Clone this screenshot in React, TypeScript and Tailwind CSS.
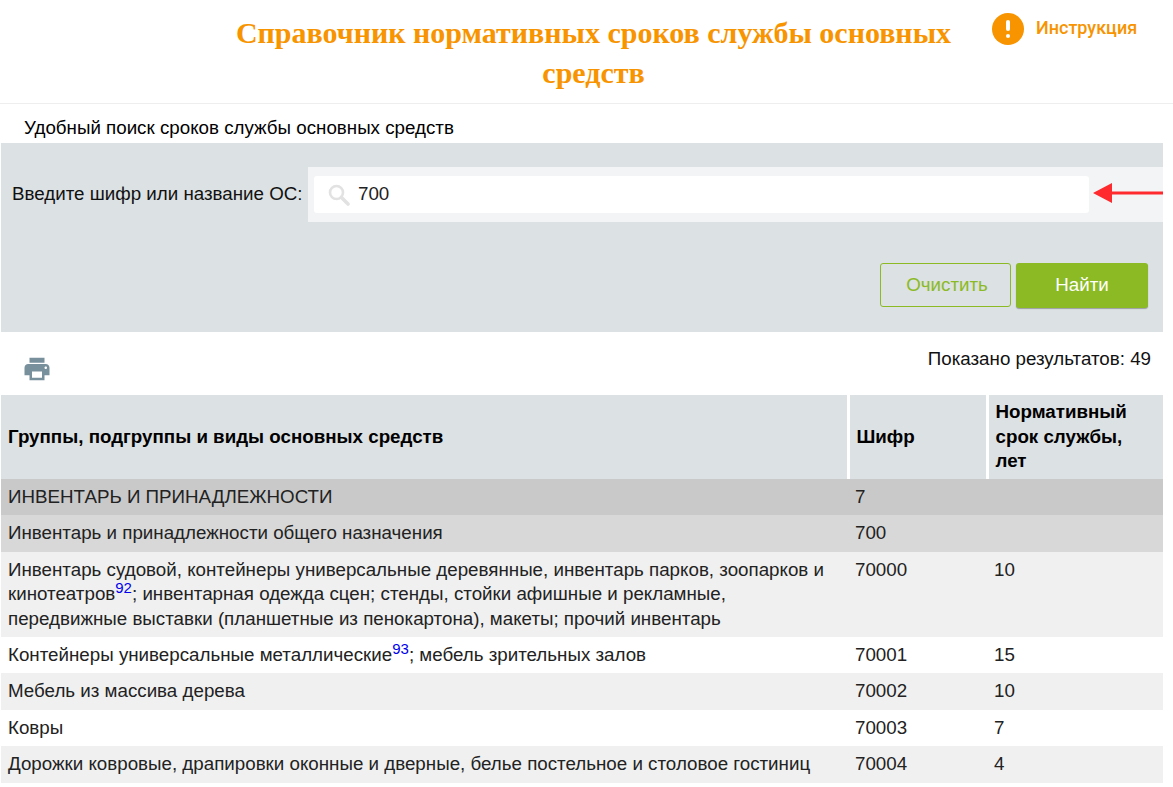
const rows = [
  { name: "ИНВЕНТАРЬ И ПРИНАДЛЕЖНОСТИ", code: "7", years: "", bg: "bg-[#c9c9c9]" },
  { name: "Инвентарь и принадлежности общего назначения", code: "700", years: "", bg: "bg-[#d8d8d8]" },
  {
    name: (
      <>
        Инвентарь судовой, контейнеры универсальные деревянные, инвентарь парков, зоопарков и кинотеатров
        <Note n="92" />; инвентарная одежда сцен; стенды, стойки афишные и рекламные, передвижные выставки (планшетные из пенокартона), макеты; прочий инвентарь
      </>
    ),
    code: "70000",
    years: "10",
    bg: "bg-[#f0f0f0]",
  },
  {
    name: (
      <>
        Контейнеры универсальные металлические
        <Note n="93" />; мебель зрительных залов
      </>
    ),
    code: "70001",
    years: "15",
    bg: "bg-white",
  },
  { name: "Мебель из массива дерева", code: "70002", years: "10", bg: "bg-[#f0f0f0]" },
  { name: "Ковры", code: "70003", years: "7", bg: "bg-white" },
  {
    name: "Дорожки ковровые, драпировки оконные и дверные, белье постельное и столовое гостиниц",
    code: "70004",
    years: "4",
    bg: "bg-[#f0f0f0]",
  },
];

function Note({ n }: { n: string }) {
  return <sup className="text-[15px] leading-none text-[#0000ee]">{n}</sup>;
}

export default function App() {
  return (
    <div className="h-[787px] w-[1173px] overflow-hidden bg-white font-['Liberation_Sans',Arial,sans-serif] text-[18.76px] text-[#222]">
      <header className="flex h-[104px] border-b border-[#eeeeee]">
        <h1 className="ml-[222px] w-[743px] pt-[13px] text-center font-['Liberation_Serif',serif] text-[30px] leading-[40px] font-bold text-[#f79400]">
          Справочник нормативных сроков службы основных средств
        </h1>
        <div className="mt-[13px] ml-[27px] flex h-[32px] items-center gap-[12px]">
          <span className="flex h-[32px] w-[32px] flex-col items-center justify-center gap-[3px] rounded-full bg-[#f79400]">
            <span className="h-[11px] w-[4px] rounded-[2px] bg-white" />
            <span className="h-[4px] w-[4px] rounded-full bg-white" />
          </span>
          <span className="mb-[3px] font-['Roboto',sans-serif] text-[18px] font-medium text-[#f79400]">Инструкция</span>
        </div>
      </header>

      <p className="flex h-[39px] items-center pt-[9px] pl-[24px] text-black">Удобный поиск сроков службы основных средств</p>

      <section className="ml-[1px] h-[189px] w-[1162px] bg-[#dce1e3]">
        <div className="flex pt-[24px]">
          <label className="w-[307px] pt-[13px] pl-[11px] text-[#111]">Введите шифр или название ОС:</label>
          <div className="relative flex h-[55px] w-[855px] items-center bg-[#f2f4f6] pl-[6px]">
            <div className="flex h-[37px] w-[775px] items-center gap-[8px] rounded-[3px] bg-white pl-[14px]">
              <svg width="22" height="22" viewBox="0 0 22 22" fill="none" stroke="#e2e2e2">
                <circle cx="8.5" cy="8.5" r="6.5" strokeWidth="2.6" />
                <path d="M13.5 13.5 L20 20" strokeWidth="3.6" strokeLinecap="round" />
              </svg>
              <span className="text-[#222]">700</span>
            </div>
            <svg className="absolute top-[15px] left-[784px]" width="71" height="22" viewBox="0 0 71 22">
              <path d="M1 11 L20 1 V9.5 H71 V12.5 H20 V21 Z" fill="#fe2a2e" />
            </svg>
          </div>
        </div>
        <div className="mt-[41px] flex justify-end gap-[5px] pr-[15px]">
          <button className="h-[44px] w-[131px] rounded-[3px] border border-[#8bba25] pl-[3px] text-[#8bba25]">Очистить</button>
          <button className="h-[45px] w-[132px] rounded-[3px] bg-[#8bba25] font-medium text-white shadow-[0_1px_1px_rgba(0,0,0,0.3)]">
            Найти
          </button>
        </div>
      </section>

      <div className="flex h-[63px] items-start justify-between pr-[22px] pl-[22px]">
        <svg className="mt-[22px]" width="30" height="30" viewBox="0 0 24 24" fill="#78909c">
          <path d="M19 8H5c-1.66 0-3 1.34-3 3v6h4v4h12v-4h4v-6c0-1.66-1.34-3-3-3zm-3 11H8v-5h8v5zm3-7c-.55 0-1-.45-1-1s.45-1 1-1 1 .45 1 1-.45 1-1 1zm-1-9H6v4h12V3z" />
        </svg>
        <span className="pt-[13px] text-[#111]">Показано результатов: 49</span>
      </div>

      <table className="ml-[1px] w-[1162px] table-fixed border-collapse leading-[24.4px]">
        <colgroup>
          <col className="w-[847px]" />
          <col className="w-[139px]" />
          <col />
        </colgroup>
        <thead>
          <tr className="h-[84px] bg-[#dce1e3] text-left font-bold text-black">
            <th className="border-r-[3px] border-white px-[7px]">Группы, подгруппы и виды основных средств</th>
            <th className="border-r-[3px] border-white px-[7px]">Шифр</th>
            <th className="px-[7px]">Нормативный срок службы, лет</th>
          </tr>
        </thead>
        <tbody>
          {rows.map((r) => (
            <tr key={r.code} className={r.bg}>
              <td className="px-[7px] py-[6px] align-top">{r.name}</td>
              <td className="px-[7px] py-[6px] align-top">{r.code}</td>
              <td className="px-[7px] py-[6px] align-top">{r.years}</td>
            </tr>
          ))}
        </tbody>
      </table>
    </div>
  );
}
